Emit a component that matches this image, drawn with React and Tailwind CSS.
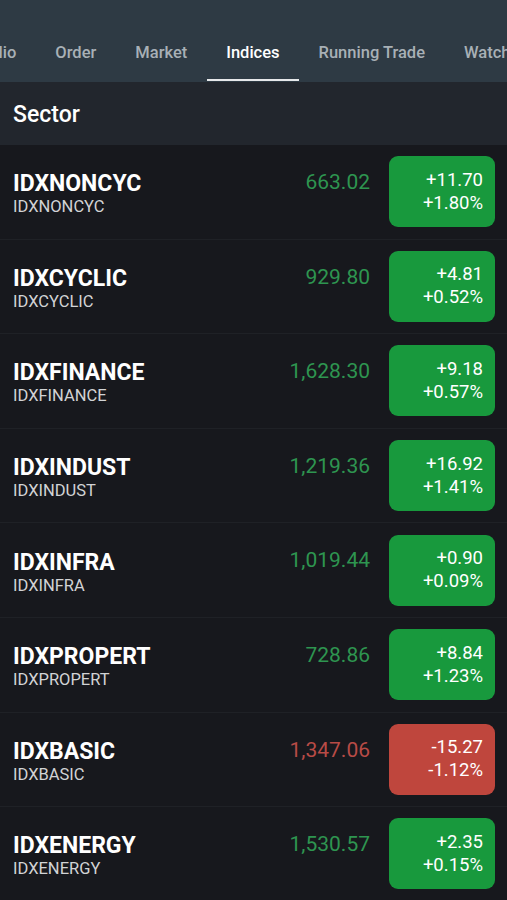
import React from "react";

const rows = [
  { name: "IDXNONCYC", price: "663.02", chg: "+11.70", pct: "+1.80%", up: true },
  { name: "IDXCYCLIC", price: "929.80", chg: "+4.81", pct: "+0.52%", up: true },
  { name: "IDXFINANCE", price: "1,628.30", chg: "+9.18", pct: "+0.57%", up: true },
  { name: "IDXINDUST", price: "1,219.36", chg: "+16.92", pct: "+1.41%", up: true },
  { name: "IDXINFRA", price: "1,019.44", chg: "+0.90", pct: "+0.09%", up: true },
  { name: "IDXPROPERT", price: "728.86", chg: "+8.84", pct: "+1.23%", up: true },
  { name: "IDXBASIC", price: "1,347.06", chg: "-15.27", pct: "-1.12%", up: false },
  { name: "IDXENERGY", price: "1,530.57", chg: "+2.35", pct: "+0.15%", up: true },
];

const tabs = ["lio", "Order", "Market", "Indices", "Running Trade", "Watch"];

export default function App() {
  return (
    <div
      className="w-[507px] h-[900px] overflow-hidden bg-[#17181d]"
      style={{ fontFamily: "Roboto, 'Noto Sans', sans-serif" }}
    >
      <div className="h-[82px] bg-[#2e3a44] flex flex-col">
        <div className="h-[30px]" />
        <div className="flex items-start h-[52px] -ml-[21px] whitespace-nowrap">
          {tabs.map((t) => (
            <div
              key={t}
              className={`relative px-[19.5px] h-full flex items-start pt-[11px] text-[16.5px] font-medium ${
                t === "Indices" ? "text-white" : "text-[#a8b0b6]"
              }`}
            >
              {t}
              {t === "Indices" && (
                <div className="absolute left-0 right-0 bottom-[1px] h-[2px] bg-[#e6e8ea]" />
              )}
            </div>
          ))}
        </div>
      </div>
      <div className="h-[63px] bg-[#22262d] flex items-center px-[13px] pt-[3px]">
        <span className="text-[23px] font-medium text-white">Sector</span>
      </div>
      <div>
        {rows.map((r) => (
          <div
            key={r.name}
            className="h-[94.6px] border-b border-[#1f2126] flex items-center pl-[13px] pr-[12px]"
          >
            <div className="flex-1 flex flex-col mt-[4px]">
              <span className="text-[23px] font-bold text-white leading-[26px]">{r.name}</span>
              <span className="text-[16.5px] text-[#d2d3d5] leading-[19px]">{r.name}</span>
            </div>
            <div
              className={`text-[21px] mr-[19px] -mt-[18px] ${
                r.up ? "text-[#2e9550]" : "text-[#b84b46]"
              }`}
            >
              {r.price}
            </div>
            <div
              className={`w-[106px] h-[71px] rounded-[9px] flex flex-col justify-center items-end pr-[12px] text-white text-[18.5px] leading-[23px] ${
                r.up ? "bg-[#18993d]" : "bg-[#bf463d]"
              }`}
            >
              <span>{r.chg}</span>
              <span>{r.pct}</span>
            </div>
          </div>
        ))}
      </div>
    </div>
  );
}
